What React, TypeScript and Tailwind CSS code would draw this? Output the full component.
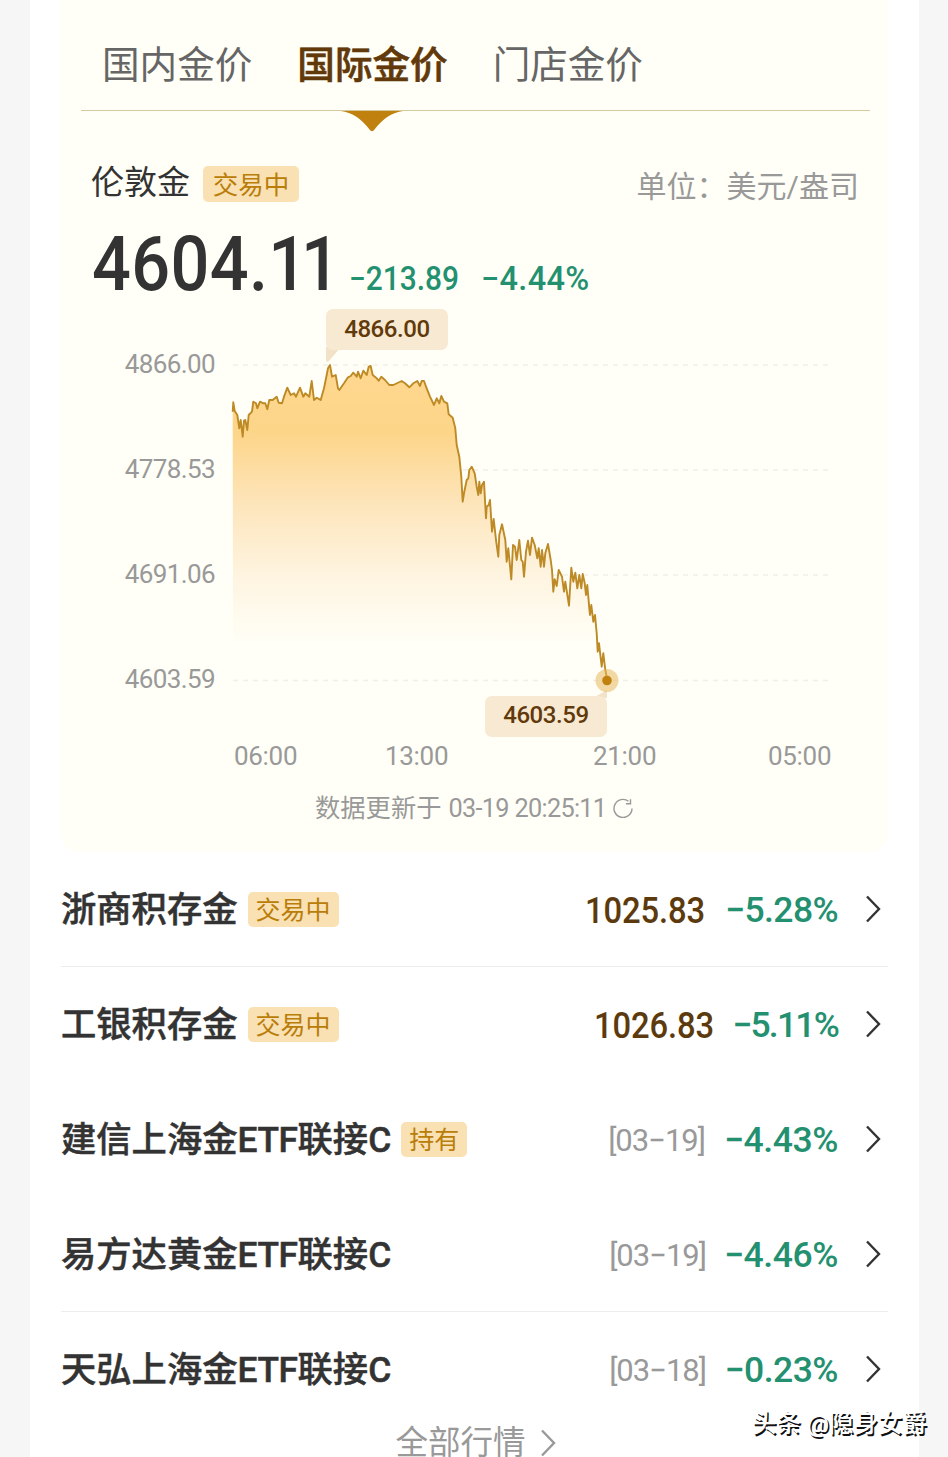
import React from "react";

type Point = [number, number];

const SEGMENTS: { x: number; y: number; points: Point[] }[] = [
  {
    x: 220,
    y: 300,
    points: [
      [38, 335], [40, 307], [44, 333], [52, 345], [58, 385], [62, 360], [68, 410], [72, 362], [76, 360], [82, 390],
      [86, 345], [96, 335], [100, 305], [108, 310], [112, 325], [120, 305], [130, 310], [136, 310], [142, 328], [148, 300],
      [158, 300], [170, 290], [176, 308], [186, 310], [192, 290], [202, 263], [212, 285], [222, 280], [228, 290], [240, 263],
      [250, 290], [256, 280], [268, 290], [275, 243], [282, 300], [290, 293], [302, 300], [312, 265], [320, 225], [324, 205],
      [330, 195], [336, 230], [347, 225], [354, 265], [358, 270], [372, 250], [384, 232], [392, 228], [400, 218], [410, 230],
      [414, 215], [422, 235], [430, 212], [440, 225], [446, 200], [452, 198], [458, 225], [470, 235], [476, 242], [484, 230],
      [495, 240], [508, 255], [520, 255], [545, 243], [555, 250], [568, 262], [580, 250], [592, 243], [600, 258], [605, 243],
      [612, 243], [620, 265], [630, 290], [642, 315], [650, 295], [658, 310], [664, 288], [672, 305], [682, 310],
    ],
  },
  {
    x: 420,
    y: 370,
    points: [
      [86, 133], [98, 143], [106, 175], [110, 225], [118, 260], [124, 320], [128, 395], [133, 365], [140, 330], [145, 325],
      [148, 300], [155, 290], [164, 310], [170, 350], [175, 375], [178, 335], [182, 370], [186, 345], [192, 335], [198, 445],
      [200, 410], [206, 405], [210, 390], [216, 485], [221, 447], [228, 510], [235, 560], [238, 495], [246, 463], [256, 510],
      [260, 575], [265, 535], [274, 628], [279, 525], [285, 530], [290, 570], [298, 510], [304, 570], [308, 575], [312, 620],
      [318, 545], [324, 512], [330, 555], [336, 503], [344, 525], [352, 565], [356, 535], [362, 590], [366, 540], [372, 590],
      [376, 550], [384, 522], [392, 570], [396, 600],
    ],
  },
  {
    x: 420,
    y: 520,
    points: [
      [400, 215], [404, 178], [410, 198], [416, 150], [426, 170], [432, 215], [436, 185], [447, 257], [454, 143], [460, 185],
      [466, 158], [472, 205], [478, 165], [484, 205], [488, 162], [494, 190], [498, 225], [502, 195], [508, 265], [510, 285],
      [514, 255], [520, 305], [525, 285], [530, 340], [533, 395], [537, 370], [545, 440], [550, 400], [556, 450], [562, 480],
    ],
  },
];

const LINE = SEGMENTS.flatMap((s) =>
  s.points.map(([px, py]) => `${(s.x + px / 3).toFixed(1)},${(s.y + py / 3).toFixed(1)}`),
).join(" L");

function Chart() {
  return (
    <svg className="block h-[440px] w-[620px] flex-none" viewBox="223 300 620 440" fill="none">
      <defs>
        <linearGradient id="area" gradientUnits="userSpaceOnUse" x1="0" y1="365" x2="0" y2="645">
          <stop offset="0" stopColor="#ffd78f" />
          <stop offset="0.24" stopColor="#fdd589" />
          <stop offset="0.5" stopColor="#fde5bb" />
          <stop offset="0.75" stopColor="#fef4e0" />
          <stop offset="1" stopColor="#fffff7" />
        </linearGradient>
      </defs>
      {[365, 470, 575, 680.5].map((y) => (
        <path key={y} d={`M233 ${y}H830`} stroke="#f1efe8" strokeWidth="1.3" strokeDasharray="5 5" />
      ))}
      <path d={`M${LINE} V645 H233 Z`} fill="url(#area)" />
      <path d={`M${LINE}`} stroke="#bd8a25" strokeWidth="1.9" strokeLinejoin="round" />
      <path d="M326 347H341L329 361Q326 364 326 359Z" fill="#f2e3c8" />
      <path d="M593 698H607V690Z" fill="#f2e3c8" />
      <circle cx="607" cy="680.5" r="11.5" fill="#e8b85f" fillOpacity="0.55" />
      <circle cx="607" cy="680.5" r="4.8" fill="#c0810f" />
    </svg>
  );
}

function Chevron({ className }: { className: string }) {
  return (
    <svg className={className} viewBox="0 0 16 30" fill="none" stroke="currentColor" strokeWidth="2.4">
      <path d="M2 2.500L14 15L2 27.500" />
    </svg>
  );
}

function Tag({ children, className }: { children: React.ReactNode; className: string }) {
  return (
    <span className={`flex items-center justify-center rounded-[5px] bg-[#fae1b3] pt-[3px] leading-none text-[#b97d0a] ${className}`}>
      {children}
    </span>
  );
}

interface Row {
  name: [string, string?, string?];
  tag?: string;
  tagWidth?: string;
  price?: string;
  date?: string;
  change: string;
  changeStyle: string;
  divider?: boolean;
}

const ROWS: Row[] = [
  { name: ["浙商积存金"], tag: "交易中", tagWidth: "w-[91px]", price: "1025.83", change: "−5.28%", changeStyle: "w-[133px] tracking-[-0.6px]", divider: true },
  { name: ["工银积存金"], tag: "交易中", tagWidth: "w-[91px]", price: "1026.83", change: "−5.11%", changeStyle: "w-[124px] tracking-[-1.8px]" },
  { name: ["建信上海金", "ETF", "联接C"], tag: "持有", tagWidth: "w-[66px]", date: "[03−19]", change: "−4.43%", changeStyle: "w-[133px] tracking-[-0.4px]" },
  { name: ["易方达黄金", "ETF", "联接C"], date: "[03−19]", change: "−4.46%", changeStyle: "w-[132px] tracking-[-0.4px]", divider: true },
  { name: ["天弘上海金", "ETF", "联接C"], date: "[03−18]", change: "−0.23%", changeStyle: "w-[132px] tracking-[-0.5px]" },
];

function ProductRow({ row }: { row: Row }) {
  const [head, code, tail] = row.name;
  return (
    <div className={`flex h-[115px] flex-none items-center border-b ${row.divider ? "border-[#ededed]" : "border-transparent"}`}>
      <span className="whitespace-nowrap pt-[4px] text-[35.3px] font-medium leading-none text-[#333] [-webkit-text-stroke:0.5px_#333]">
        {head}
        {code && <span className="tracking-[-0.4px]">{code}</span>}
        {tail}
      </span>
      {row.tag && <Tag className={`ml-[10px] h-[35px] text-[25px] ${row.tagWidth}`}>{row.tag}</Tag>}
      <span className="ml-auto flex items-center pt-[3px] leading-none">
        {row.price && (
          <span className="origin-right scale-x-[0.91] text-[36px] font-medium tracking-[-0.1px] text-[#5c3a0e]">{row.price}</span>
        )}
        {row.date && <span className="text-[31px] tracking-[-1px] text-[#999]">{row.date}</span>}
        <span className={`text-right text-[35.5px] font-medium text-[#239070] ${row.changeStyle}`}>{row.change}</span>
      </span>
      <Chevron className="ml-[27px] mr-[7px] h-[30px] w-[16px] flex-none text-[#333]" />
    </div>
  );
}

export default function App() {
  return (
    <div className="relative flex h-[1457px] w-[948px] overflow-hidden bg-[#f6f6f6] pl-[30px] font-['Roboto','Noto_Sans_CJK_SC',sans-serif]">
      <main className="flex w-[889px] flex-none flex-col bg-white px-[31px]">
        <section className="flex h-[852px] flex-none flex-col rounded-b-[18px] bg-[#fffff7] pl-[20px] pr-[18px]">
          <nav className="flex h-[111px] flex-none items-center gap-[45px] border-b border-[#d3cb9e] pl-[21px] pt-[22px] text-[37.6px] leading-none text-[#666]">
            <span>国内金价</span>
            <span className="font-medium text-[#61390a] [-webkit-text-stroke:0.6px_#61390a]">国际金价</span>
            <span>门店金价</span>
          </nav>
          <svg className="ml-[260px] block h-[21px] w-[62px] flex-none" viewBox="0 0 62 21">
            <path d="M0 0H62Q46 2 33.500 18.500Q31 22 28.500 18.500Q16 2 0 0Z" fill="#c0810f" />
          </svg>
          <div className="flex h-[90px] flex-none items-center pl-[10px] pr-[11px] leading-none">
            <span className="mb-[-11px] text-[33px] text-[#333]">伦敦金</span>
            <Tag className="mb-[-14px] ml-[13px] h-[36px] w-[96px] text-[25.5px]">交易中</Tag>
            <span className="mb-[-20px] ml-auto text-[30px] text-[#999]">单位：美元/盎司</span>
          </div>
          <div className="flex h-[78px] flex-none items-baseline pl-[11px] font-medium leading-[84px]">
            <span className="w-[257px] origin-left scale-x-[0.9] whitespace-nowrap text-[76px] tracking-[0.4px] text-[#333]">
              4604.<span className="tracking-[-7px]">11</span>
            </span>
            <span className="w-[132px] origin-left scale-x-[0.92] text-[32.5px] text-[#239070]">−213.89</span>
            <span className="text-[32.5px] tracking-[0.3px] text-[#239070]">−4.44%</span>
          </div>
          <div className="relative flex h-[440px] flex-none">
            <div className="flex w-[142px] flex-none flex-col pr-[8px] pt-[12px] text-right text-[26px] tracking-[-0.6px] text-[#999]">
              {["4866.00", "4778.53", "4691.06", "4603.59"].map((v) => (
                <span key={v} className="h-[105px] leading-[105px]">{v}</span>
              ))}
            </div>
            <Chart />
            <span className="absolute left-[245px] top-[9px] flex h-[41px] w-[122px] items-center justify-center rounded-[7px] bg-[#f7e9d2] pb-[2px] text-[24px] font-medium tracking-[-0.4px] text-[#61390a]">
              4866.00
            </span>
            <span className="absolute left-[404px] top-[396px] flex h-[41px] w-[122px] items-center justify-center rounded-[7px] bg-[#f7e9d2] pb-[3px] text-[24px] font-medium tracking-[-0.4px] text-[#61390a]">
              4603.59
            </span>
          </div>
          <div className="flex h-[32px] flex-none items-center pl-[153px] text-[26px] leading-none tracking-[-0.3px] text-[#999]">
            <span className="w-[151px]">06:00</span>
            <span className="w-[208px]">13:00</span>
            <span className="w-[175px]">21:00</span>
            <span>05:00</span>
          </div>
          <div className="mt-[21px] flex h-[32px] flex-none items-center pl-[234px] text-[25.3px] leading-none text-[#999]">
            <span>数据更新于</span>
            <span className="ml-[7px] tracking-[-0.7px]">03-19 20:25:11</span>
            <svg className="mb-[3px] ml-[7px] h-[20px] w-[20px]" viewBox="0 0 20 20" fill="none" stroke="#999" strokeWidth="1.4">
              <path d="M15.500 3.300A9 9 0 1 0 19 10.500" />
              <path d="M17.500 1.200V5.700H13" />
            </svg>
          </div>
        </section>
        {ROWS.map((row) => (
          <ProductRow key={row.name[0]} row={row} />
        ))}
        <div className="flex h-[32px] flex-none items-center justify-center pl-[2px] text-[32.5px] leading-none text-[#999]">
          <span>全部行情</span>
          <Chevron className="ml-[14px] h-[30px] w-[16px]" />
        </div>
      </main>
      <span className="absolute left-[752px] top-[1411px] whitespace-nowrap text-[24.5px] font-medium leading-[26px] text-white [text-shadow:1.5px_1.5px_0_#111]">
        头条 @隐身女爵
      </span>
    </div>
  );
}
